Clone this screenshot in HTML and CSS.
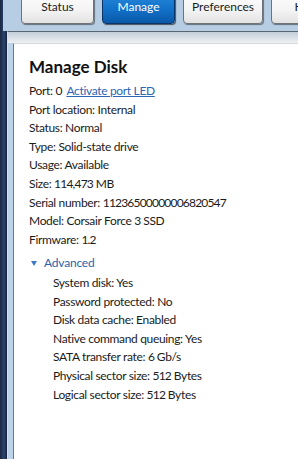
FILE: index.html
```html
<!DOCTYPE html>
<html lang="en">
<head>
  <meta charset="UTF-8">
  <meta name="viewport" content="width=device-width, initial-scale=1.0">
  <title>Manage Disk</title>
  <link rel="stylesheet" href="styles.css">
</head>
<body>
  <div class="toolbar">
    <button class="tab">Status</button>
    <button class="tab active">Manage</button>
    <button class="tab">Preferences</button>
    <button class="tab">Help</button>
  </div>
  <div class="main">
    <div class="content">
      <div class="panel">
        <h1>Manage Disk</h1>
        <ul class="props">
          <li>Port: <span class="n">0</span> <a href="#" class="led">Activate port LED</a></li>
          <li>Port location: Internal</li>
          <li>Status: Normal</li>
          <li>Type: Solid-state drive</li>
          <li>Usage: Available</li>
          <li>Size: <span class="n">114,473</span> MB</li>
          <li>Serial number: <span class="n">11236500000006820547</span></li>
          <li>Model: Corsair Force <span class="n">3</span> SSD</li>
          <li>Firmware: <span class="n">1.2</span></li>
        </ul>
        <div class="advanced"><span class="arrow"></span>Advanced</div>
        <ul class="props sub">
          <li>System disk: Yes</li>
          <li>Password protected: No</li>
          <li>Disk data cache: Enabled</li>
          <li>Native command queuing: Yes</li>
          <li>SATA transfer rate: <span class="n">6</span> Gb/s</li>
          <li>Physical sector size: <span class="n">512</span> Bytes</li>
          <li>Logical sector size: <span class="n">512</span> Bytes</li>
        </ul>
      </div>
    </div>
  </div>
</body>
</html>
```

FILE: styles.css
```css
html, body { height: 100%; }
body { margin: 0; font-family: 'Lato', 'Liberation Sans', sans-serif; font-size: 12px; color: #1b1b1b; background: linear-gradient(90deg, #1a2740 0, #2b4570 4px, #16223a 7px); overflow: hidden; display: flex; flex-direction: column; }
.toolbar { margin-left: 3px; height: 31px; background: #b6cde4; padding-left: 18px; display: flex; gap: 8px; overflow: hidden; flex-shrink: 0; }
.tab { margin-top: -11px; height: 35px; width: 73px; flex-shrink: 0; padding: 0 0 1px; border: 1px solid #6f7378; border-radius: 4px; background: linear-gradient(#ffffff, #f4f4f4 60%, #e2e2e2); box-shadow: 1px 1px 1px rgba(0,0,0,0.45); font-family: inherit; font-size: 12px; color: #1b1b1b; }
.tab:nth-child(3) { width: 80px; }
.tab:nth-child(4) { width: 72px; }
.tab.active { background: linear-gradient(#2a8ee0, #1270c8 60%, #0a58a8); border-color: #0b3566; color: #fff; box-shadow: 1px 1px 1px rgba(0,0,0,0.6); }
.main { flex: 1; display: flex; }
.content { flex: 1; margin-left: 7px; border-left: 1px solid #d6e2ee; border-top: 1px solid #5a6572; background: linear-gradient(#c4ced9, #edf0f3 11px, #bcd3ea 11px); padding: 11px 0 0 5px; display: flex; }
.panel { flex: 1; background: #fff; border-left: 1px solid #6d7884; border-top: 1px solid #d5dbe1; padding: 12px 0 0 15px; }
h1 { margin: 0 0 4px; font-size: 17px; font-weight: bold; color: #111; line-height: 22px; }
.props { list-style: none; margin: 0; padding: 0; line-height: 18.6px; letter-spacing: -0.33px; }
.n { letter-spacing: -0.8px; }
.led { color: #2d66b3; margin-left: 2px; }
.advanced { margin-top: 5px; line-height: 18.6px; color: #2a62ad; padding-left: 2px; display: flex; align-items: center; letter-spacing: -0.2px; }
.arrow { width: 0; height: 0; border-left: 3.5px solid transparent; border-right: 3.5px solid transparent; border-top: 5px solid #3d7ac8; margin-right: 7px; }
.sub { padding-left: 24px; margin-top: 1px; }
```
